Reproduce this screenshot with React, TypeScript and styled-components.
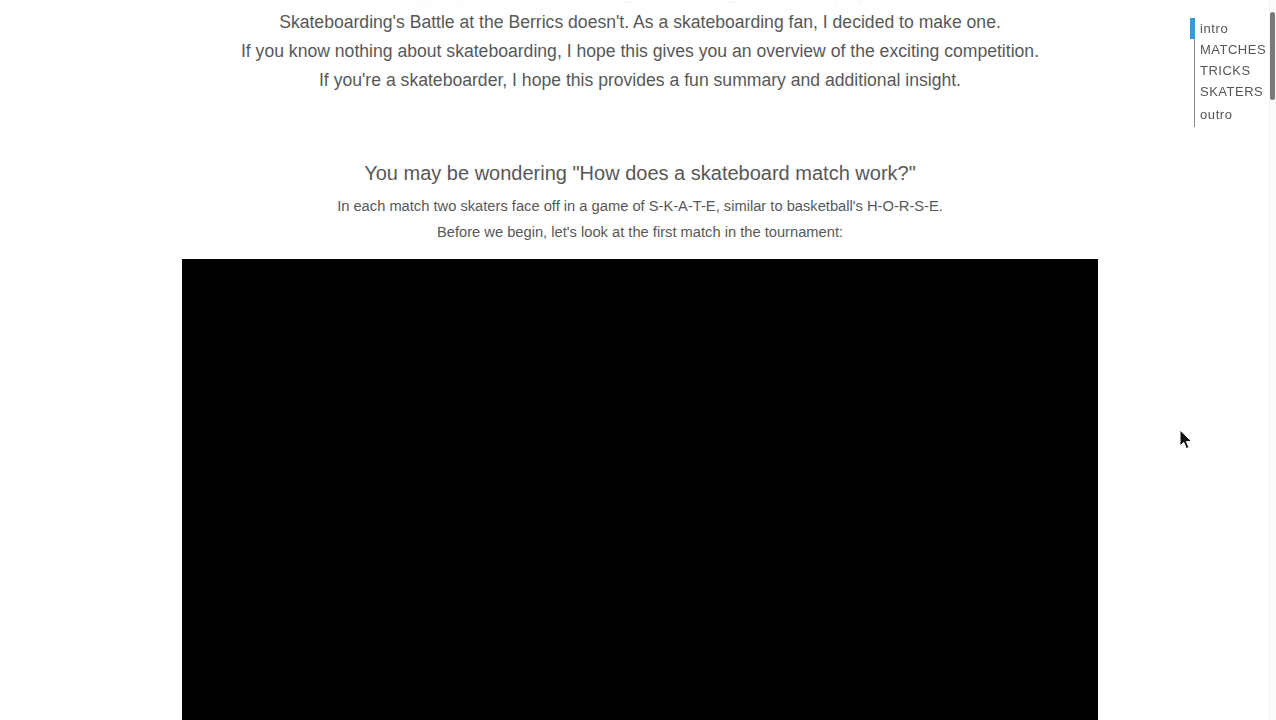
import React from "react"
import styled, { createGlobalStyle } from "styled-components"

const GlobalStyle = createGlobalStyle`
  html, body {
    margin: 0;
    padding: 0;
    background: #fff;
    overflow: hidden;
  }
  body {
    font-family: "Liberation Sans", Arial, Helvetica, sans-serif;
    color: #585858;
  }
`

const navItems = [
  { label: "intro", active: true },
  { label: "MATCHES", active: false },
  { label: "TRICKS", active: false },
  { label: "SKATERS", active: false },
  { label: "outro", active: false },
]

const introLines = [
  "Most major sports have fan-made guides to the game and its players, but",
  "Skateboarding's Battle at the Berrics doesn't. As a skateboarding fan, I decided to make one.",
  "If you know nothing about skateboarding, I hope this gives you an overview of the exciting competition.",
  "If you're a skateboarder, I hope this provides a fun summary and additional insight.",
]

export default function App() {
  return (
    <>
      <GlobalStyle />
      <S.Page>
        <S.Intro>
          {introLines.map((line) => (
            <S.IntroLine key={line}>{line}</S.IntroLine>
          ))}
        </S.Intro>

        <S.Section>
          <S.Heading>You may be wondering "How does a skateboard match work?"</S.Heading>
          <S.Small>In each match two skaters face off in a game of S-K-A-T-E, similar to basketball's H-O-R-S-E.</S.Small>
          <S.Small>Before we begin, let's look at the first match in the tournament:</S.Small>
          <S.Video />
        </S.Section>
      </S.Page>

      {/* fade at the top edge of the viewport */}
      <S.TopFade />

      {/* side navigation */}
      <S.Nav>
        {navItems.map((item, i) => (
          <S.NavItem
            key={item.label}
            active={item.active}
            caps={item.label !== item.label.toLowerCase()}
            last={i === navItems.length - 1}
          >
            {item.label}
          </S.NavItem>
        ))}
      </S.Nav>

      <S.ScrollTrack>
        <S.ScrollThumb />
      </S.ScrollTrack>

      <S.Cursor width="14" height="22" viewBox="0 0 14 22">
        <path d="M1 1 L1 17 L4.8 13.4 L7.4 19.6 L10 18.5 L7.4 12.5 L12.6 12.5 Z" fill="#111" stroke="#fff" strokeWidth="1" />
      </S.Cursor>
    </>
  )
}

const S = {
  Page: styled.div`
    width: 1276px;
    height: 720px;
    padding-left: 4px;
    box-sizing: border-box;
    overflow: hidden;
    display: flex;
    flex-direction: column;
    align-items: center;
  `,
  Intro: styled.div`
    margin-top: -21px;
    display: flex;
    flex-direction: column;
    align-items: center;
  `,
  IntroLine: styled.p`
    margin: 0;
    font-size: 17.6px;
    line-height: 29px;
    text-align: center;
    white-space: nowrap;
  `,
  Section: styled.div`
    margin-top: 64px;
    display: flex;
    flex-direction: column;
    align-items: center;
  `,
  Heading: styled.h2`
    margin: 0 0 6px;
    font-size: 20px;
    font-weight: normal;
    line-height: 28px;
    white-space: nowrap;
  `,
  Small: styled.p`
    margin: 0;
    font-size: 14.7px;
    line-height: 26px;
    white-space: nowrap;
  `,
  Video: styled.div`
    margin-top: 14px;
    width: 916px;
    height: 480px;
    background: #000;
  `,
  TopFade: styled.div`
    position: fixed;
    top: 0;
    left: 0;
    right: 0;
    height: 12px;
    background: linear-gradient(to bottom, rgba(255, 255, 255, 1), rgba(255, 255, 255, 0.6));
    pointer-events: none;
  `,
  Nav: styled.nav`
    position: fixed;
    top: 18px;
    left: 1194px;
    display: flex;
    flex-direction: column;
    border-left: 1px solid #888;
    padding-bottom: 2px;
  `,
  NavItem: styled.div<{ active: boolean; caps: boolean; last: boolean }>`
    position: relative;
    padding-left: 5px;
    margin-top: ${({ last }) => (last ? "2px" : "0")};
    font-size: 13px;
    line-height: 21px;
    height: 21px;
    letter-spacing: ${({ caps }) => (caps ? "0.5px" : "0.6px")};
    color: #555;
    &::before {
      content: "";
      display: ${({ active }) => (active ? "block" : "none")};
      position: absolute;
      left: -5px;
      top: 0;
      bottom: 0;
      width: 5px;
      background: #2d9fe0;
    }
  `,
  ScrollTrack: styled.div`
    position: fixed;
    top: 0;
    right: 0;
    width: 6px;
    height: 720px;
    border-left: 1px solid #f3f3f3;
    background: #fbfbfb;
  `,
  ScrollThumb: styled.div`
    margin: 12px 0 0 0;
    width: 5px;
    height: 88px;
    border-radius: 3px;
    background: #7a7a7a;
  `,
  Cursor: styled.svg`
    position: fixed;
    left: 1179px;
    top: 429px;
  `,
}
